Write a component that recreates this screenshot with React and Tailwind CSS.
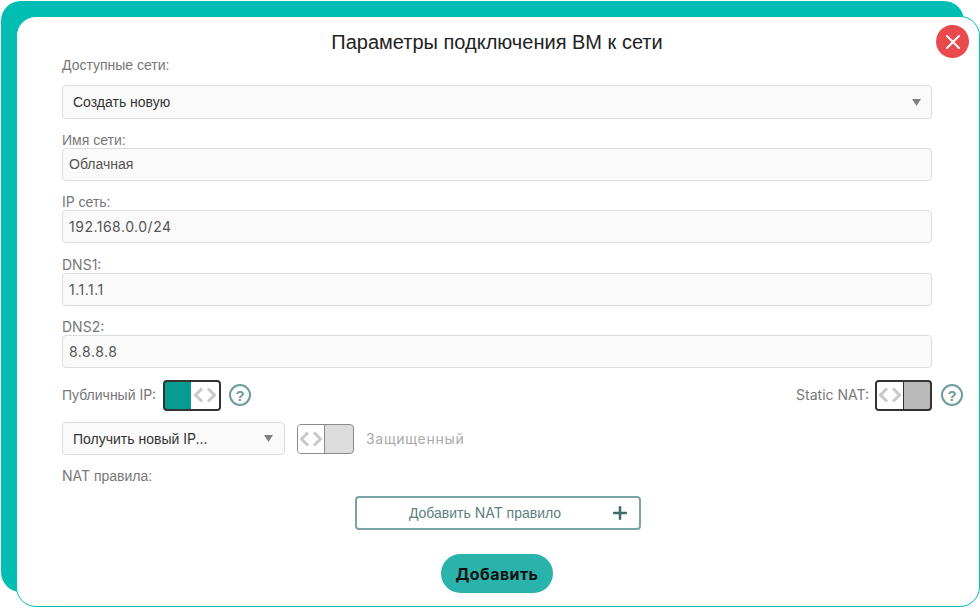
import React from 'react';
import { Plus, X } from 'lucide-react';

const baseFont = "font-['Liberation_Sans',Arial,sans-serif]";

// latin text in the reference comes from another family than the cyrillic
const Lat = ({ children }) => <span className="font-['Inter',sans-serif]">{children}</span>;
const Val = ({ children }) => <span className="font-['Inter',sans-serif] tracking-[0.5px]">{children}</span>;

const Caret = () => (
  <svg width="9" height="7" viewBox="0 0 9 7" className="shrink-0">
    <path d="M0 0h9L4.5 7z" fill="#7f7f7f" />
  </svg>
);

const Arrows = () => (
  <svg width="26" height="18" viewBox="0 0 26 18" fill="none" stroke="#c9c9c9" strokeWidth="3">
    <path d="M10 2.5L3.5 9l6.5 6.5" />
    <path d="M16 2.5L22.5 9 16 15.5" />
  </svg>
);

const Help = () => (
  <div className="w-[22px] h-[22px] rounded-full border-2 border-[#6f9c9c] flex items-center justify-center text-[15px] leading-none font-bold text-[#6f9c9c]">
    ?
  </div>
);

const Field = ({ label, value, className }) => (
  <div className={className}>
    <div className="h-4 leading-4 text-[14px] text-[#777]">{label}</div>
    <div className="h-[33px] rounded-[4px] border border-[#ddd] bg-[#fafafa] pl-[6px] flex items-center text-[14px] text-[#555]">
      {value}
    </div>
  </div>
);

const App = () => {
  return (
    <div className={`relative w-[980px] h-[608px] overflow-hidden bg-white pl-4 pt-4 ${baseFont}`}>
      {/* teal panel behind the dialog */}
      <div className="absolute left-[1px] top-[1px] w-[963px] h-[591px] rounded-[20px] bg-[#02bdb4]" />

      <div className="relative w-[964px] h-[591px] rounded-[20px] border border-[#02bdb4] bg-white pl-[45px] pr-[47px]">
        <h1 className="absolute left-0 right-[2px] top-[13px] text-center text-[20px] leading-[24px] text-[#222]">
          Параметры подключения ВМ к сети
        </h1>
        <button className="absolute right-[10px] top-[8px] w-[33px] h-[33px] rounded-full bg-[#e84a4d] flex items-center justify-center">
          <X size={24} strokeWidth={2} color="#ffffff" />
        </button>

        <div className="pt-10 h-[47px]">
          <div className="h-4 leading-4 text-[14px] text-[#777]">Доступные сети:</div>
        </div>
        <div className="mt-[21px] h-[34px] rounded-[4px] border border-[#ddd] bg-[#fafafa] px-[10px] flex items-center justify-between text-[14px] text-[#333]">
          <span>Создать новую</span>
          <Caret />
        </div>

        <Field label="Имя сети:" value="Облачная" className="mt-[13px]" />
        <Field label={<><Lat>IP</Lat> сеть:</>} value={<Val>192.168.0.0/24</Val>} className="mt-[13px]" />
        <Field label={<Lat>DNS1:</Lat>} value={<Val>1.1.1.1</Val>} className="mt-[14px]" />
        <Field label={<Lat>DNS2:</Lat>} value={<Val>8.8.8.8</Val>} className="mt-[13px]" />

        <div className="mt-[11px] h-[32px] flex items-center -mr-[31px]">
          <span className="text-[14px] text-[#777]">Публичный <Lat>IP:</Lat></span>
          <div className="ml-[7px] w-[58px] h-[31px] rounded-[4px] border-2 border-[#333] bg-[#069c90] flex justify-end overflow-hidden">
            <div className="w-[28px] h-full bg-white flex items-center justify-center"><Arrows /></div>
          </div>
          <div className="ml-[8px]"><Help /></div>
          <div className="flex-1" />
          <span className="text-[14px] text-[#777]"><Lat>Static NAT:</Lat></span>
          <div className="ml-[6px] w-[57px] h-[31px] rounded-[4px] border-2 border-[#333] bg-[#b9b9b9] overflow-hidden">
            <div className="w-[27px] h-full bg-white border-r border-[#333] flex items-center justify-center"><Arrows /></div>
          </div>
          <div className="ml-[9px]"><Help /></div>
        </div>

        <div className="mt-[11px] flex items-center">
          <div className="w-[223px] h-[33px] rounded-[4px] border border-[#ddd] bg-[#fafafa] pl-[10px] pr-[11px] flex items-center justify-between text-[14px] text-[#333]">
            <span>Получить новый <Lat>IP...</Lat></span>
            <Caret />
          </div>
          <div className="ml-[12px] w-[57px] h-[30px] rounded-[4px] border border-[#8a8a8a] bg-[#dcdcdc] overflow-hidden">
            <div className="w-[27px] h-full bg-white border-r border-[#8a8a8a] flex items-center justify-center"><Arrows /></div>
          </div>
          <span className="ml-[12px] font-['Inter',sans-serif] text-[14px] tracking-[0.7px] text-[#aaa]">Защищенный</span>
        </div>

        <div className="mt-[13px] h-4 leading-4 text-[14px] text-[#777]"><Lat>NAT</Lat> правила:</div>

        <button className="relative block mt-[12px] ml-[293px] w-[286px] h-[34px] rounded-[4px] border-2 border-[#7ba3a3] text-[14px] text-[#5c7f7f] text-center pr-[26px]">
          Добавить <Lat>NAT</Lat> правило
          <Plus size={20} strokeWidth={3} color="#3f6b6b" className="absolute right-[9px] top-[5px]" />
        </button>

        <button className="block mt-[24px] ml-[379px] w-[112px] h-[39px] rounded-full bg-[#29b3aa] font-['Inter',sans-serif] text-[16px] tracking-[0.4px] font-bold text-[#111]">
          Добавить
        </button>
      </div>
    </div>
  );
};

export default App;
